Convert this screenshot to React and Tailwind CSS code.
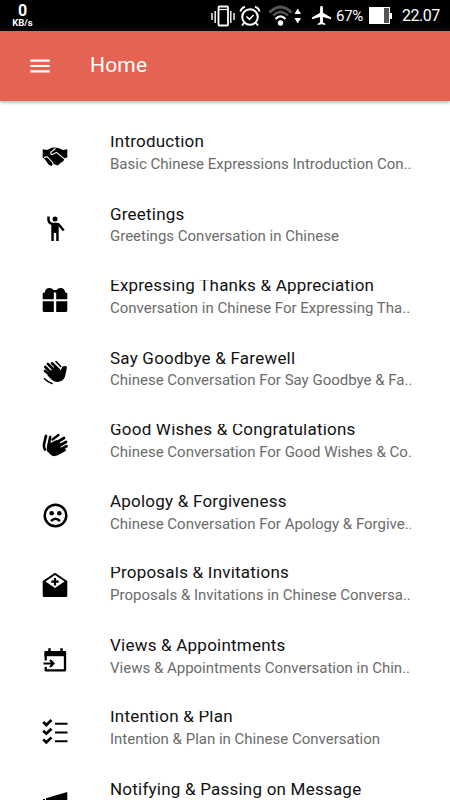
import { MdMenu, MdAirplanemodeActive } from "react-icons/md";

function HandshakeIcon() {
    return (
        <svg viewBox="0 0 26 26" className="size-[26px]">
            <path d="M0.700 6.300L5 7L9.500 4.800L13 4.500L17 5.200L21 7L25.300 6.300V14.500L22.500 15L21.500 18L18.500 20L15.500 22.500L12 21L9.500 23L6.500 21.500L3 16.500L0.700 14.500Z" fill="currentColor" />
            <path d="M13.500 5.500L9 9Q8 11.500 10.500 11.500L14.500 9.300L22 15.700" fill="none" stroke="white" strokeWidth="1.100" />
            <path d="M2 14.800Q4.500 12.700 6.500 15L11 20Q11.500 21.500 10.500 23.500" fill="none" stroke="white" strokeWidth="1.100" />
        </svg>
    );
}

function PersonIcon() {
    return (
        <svg viewBox="0 0 26 26" className="size-[26px]" fill="none" stroke="currentColor">
            <circle cx="13" cy="4" r="2.500" fill="currentColor" stroke="none" />
            <path d="M6.500 1.500V5Q6.800 8.500 10.500 9H15Q17 9.200 18 11L21.700 15.500" strokeWidth="2.500" />
            <path d="M9.300 8H16.700V26H14.200V18H11.800V26H9.300Z" fill="currentColor" stroke="none" />
        </svg>
    );
}

function GiftIcon() {
    return (
        <svg viewBox="0 0 26 26" className="size-[26px]" fill="currentColor">
            <path d="M0.700 12.300V6.800Q0.700 5.500 2.500 5.500H2.800Q3.200 1 7.500 1Q10 1 11.500 3H14.500Q16 1 18.500 1Q22.800 1 23.200 5.500H23.500Q25.300 5.500 25.300 6.800V12.300H14.200V5.500H11.800V12.300ZM0.700 14.300H11.800V25H2.500Q0.700 25 0.700 23.500ZM14.200 14.300H25.300V23.500Q25.300 25 23.500 25H14.200Z" />
        </svg>
    );
}

function WaveIcon() {
    return (
        <svg viewBox="0 0 26 26" className="size-[26px]" fill="none" stroke="currentColor" strokeLinecap="round">
            <path d="M10 4.300L17 11M5.800 4.800L14 13M3.300 8L12 16.500M3 12L11 18.500" strokeWidth="2.600" />
            <path d="M8 12.500L12.500 7.500L18.500 11.500L20.500 7.500Q24.500 6.200 25 8.200L23 17.500Q21.500 22 16 23Q12.500 23.200 9.500 20.500L5.500 16.500Z" fill="currentColor" stroke="none" />
            <path d="M14 2.500L18.700 7.500M2.500 19.800Q5.500 23 10 24.500" strokeWidth="1.600" />
        </svg>
    );
}

function ClapIcon() {
    return (
        <svg viewBox="0 0 26 26" className="size-[26px]" fill="none" stroke="currentColor" strokeLinecap="round">
            <path d="M22 7L12 13M24 11L14 16.500M24.500 15.200L15 20M22.500 19L15 23" strokeWidth="2.700" />
            <path d="M10.500 8.500L16.500 4" strokeWidth="2.300" />
            <path d="M8.500 12L14.500 9L18.500 12V21L15.500 24Q11.500 26.500 8.500 23.500L5 20Q4.500 17 5.500 12.500L7 5.500Q8.500 3.300 9.500 5.500Z" fill="currentColor" stroke="none" />
            <path d="M4 5L2 13Q1.500 16.500 3 18.500" strokeWidth="2.700" />
        </svg>
    );
}

function SadIcon() {
    return (
        <svg viewBox="0 0 26 26" className="size-[26px]">
            <circle cx="13.500" cy="12.500" r="10.800" fill="none" stroke="currentColor" strokeWidth="2.500" />
            <circle cx="9.700" cy="10.300" r="2.300" fill="currentColor" />
            <circle cx="17.300" cy="10.300" r="2.300" fill="currentColor" />
            <path d="M9 18Q13.500 13.500 18 18" fill="none" stroke="currentColor" strokeWidth="2.500" />
        </svg>
    );
}

function InviteIcon() {
    return (
        <svg viewBox="0 0 26 26" className="mb-[5px] size-[26px]">
            <path d="M0.700 9L13 0.700L25.300 9V23.500Q25.300 25 23.800 25H2.200Q0.700 25 0.700 23.500Z" fill="currentColor" />
            <path d="M13 3L22.500 9.500L13 16L3.500 9.500Z" fill="white" />
            <path d="M13 6V13.500M9.300 9.700H16.700" stroke="currentColor" strokeWidth="2.200" />
        </svg>
    );
}

function CalendarIcon() {
    return (
        <svg viewBox="0 0 26 26" className="size-[26px]" fill="none" stroke="currentColor">
            <path d="M3.700 13.500V5.500H23V23.300H3.700V20" strokeWidth="2.300" strokeLinejoin="round" />
            <path d="M2.600 4H24V9.200H2.600Z" fill="currentColor" stroke="none" />
            <path d="M7.500 1.200V5M19.500 1.200V5" strokeWidth="2.500" />
            <path d="M1.500 16.500H11.500M8 13L11.500 16.500L8 20" strokeWidth="2.100" />
        </svg>
    );
}

function ChecklistIcon() {
    return (
        <svg viewBox="0 0 26 26" className="mb-[2px] size-[26px]" fill="none" stroke="currentColor">
            <path d="M1.200 4L4.300 7L9.500 2M1.200 12.700L4.300 15.700L9.500 10.700M1.200 21.400L4.300 24.400L9.500 19.400" strokeWidth="2.700" />
            <path d="M13 5.800H25.500M13 14.500H25.500M13 23.200H25.500" strokeWidth="2" />
        </svg>
    );
}

function MegaphoneIcon() {
    return (
        <svg viewBox="0 0 26 26" className="size-[26px]" fill="currentColor">
            <path d="M1 9H3V18H1ZM4 8.300L25.300 2V24L4 18Z" />
        </svg>
    );
}

// clipped: the title's line box is shorter than its capitals
const topics = [
    { title: "Introduction", body: "Basic Chinese Expressions Introduction Con..", icon: <HandshakeIcon />, clipped: true },
    { title: "Greetings", body: "Greetings Conversation in Chinese", icon: <PersonIcon />, clipped: false },
    { title: "Expressing Thanks & Appreciation", body: "Conversation in Chinese For Expressing Tha...", icon: <GiftIcon />, clipped: true },
    { title: "Say Goodbye & Farewell", body: "Chinese Conversation For Say Goodbye & Fa..", icon: <WaveIcon />, clipped: false },
    { title: "Good Wishes & Congratulations", body: "Chinese Conversation For Good Wishes & Co.", icon: <ClapIcon />, clipped: true },
    { title: "Apology & Forgiveness", body: "Chinese Conversation For Apology & Forgive..", icon: <SadIcon />, clipped: false },
    { title: "Proposals & Invitations", body: "Proposals & Invitations in Chinese Conversa..", icon: <InviteIcon />, clipped: true },
    { title: "Views & Appointments", body: "Views & Appointments Conversation in Chin...", icon: <CalendarIcon />, clipped: false },
    { title: "Intention & Plan", body: "Intention & Plan in Chinese Conversation", icon: <ChecklistIcon />, clipped: true },
    { title: "Notifying & Passing on Message", body: "", icon: <MegaphoneIcon />, clipped: false },
];

function StatusBar() {
    return (
        <div className="flex h-[31px] shrink-0 items-center bg-black text-white">
            <div className="ml-[11px] flex w-[23px] flex-col items-center font-bold">
                <span className="text-[16px] leading-[14px]">0</span>
                <span className="text-[9.500px] leading-[9px]">KB/s</span>
            </div>
            <svg viewBox="0 0 24 22" className="ml-[177px] h-[22px] w-[24px]" fill="none" stroke="white">
                <path d="M1 8V15M4.200 6V18M19.800 6V18M23 8V15" strokeWidth="1.400" />
                <rect x="7.500" y="1.500" width="9.500" height="19" rx="1" strokeWidth="1.800" />
                <path d="M8 4.500H16" strokeWidth="1.200" />
            </svg>
            <svg viewBox="0 0 22 22" className="ml-[4px] size-[22px]" fill="none" stroke="white">
                <circle cx="11" cy="12" r="7.800" strokeWidth="2" />
                <path d="M1.500 6.500Q2 3 6 1.700M20.500 6.500Q20 3 16 1.700M5 18L3 20.500M17 18L19 20.500" strokeWidth="2" />
                <path d="M7.500 11.500L10.500 14.500L14.500 10" strokeWidth="1.500" />
            </svg>
            <svg viewBox="0 0 34 22" className="ml-[7px] h-[22px] w-[34px]" fill="none">
                <path d="M1.500 7.500Q12.500 -3.500 23.500 7.500" stroke="#555" strokeWidth="3" />
                <path d="M5 10.500Q12.500 3.500 20 10.500" stroke="#555" strokeWidth="2.200" />
                <path d="M7.500 14Q12.500 9 17.500 14" stroke="white" strokeWidth="2.200" />
                <circle cx="12.500" cy="18" r="2.700" fill="white" />
                <path d="M26.500 9L29.700 3.500L33 9ZM26.500 13H33L29.700 18.500Z" fill="white" />
            </svg>
            <MdAirplanemodeActive className="ml-[8px] size-[23px]" />
            <span className="ml-[3px] w-[28px] pt-[1px] text-[15px] leading-[20px] tracking-[-0.300px]">67%</span>
            <div className="ml-[5px] flex items-center">
                <div className="flex h-[17px] w-[21px] border border-white bg-white">
                    <div className="ml-auto h-full w-[5px] bg-[#555]"></div>
                </div>
                <div className="h-[6px] w-[2px] bg-white"></div>
            </div>
            <span className="ml-[10px] pt-[1px] text-[16px] tracking-[-0.500px]">22.07</span>
        </div>
    );
}

function Topic({ title, body, icon, clipped }) {
    return (
        <li className="flex h-[71.900px] shrink-0 items-center">
            <div className="ml-[42px] flex w-[26px] justify-center">{icon}</div>
            <div className="ml-[42px] w-[301px] self-start">
                {clipped ? (
                    <h2 className="mt-[15.500px] h-[17px] overflow-hidden text-[17px] leading-[11px] tracking-[0.220px] whitespace-nowrap text-[#111]">{title}</h2>
                ) : (
                    <h2 className="mt-[13.500px] h-[19.500px] text-[17px] leading-[16px] tracking-[0.220px] whitespace-nowrap text-[#111]">{title}</h2>
                )}
                <p className="h-[20px] overflow-hidden text-[15px] leading-[22px] whitespace-nowrap text-[#6b6b6b]">{body}</p>
            </div>
        </li>
    );
}

function App() {
    return (
        <div className="flex h-[800px] w-[450px] flex-col overflow-hidden bg-white font-[Roboto,sans-serif]">
            <StatusBar />
            <header className="flex h-[70px] shrink-0 items-center bg-[#e56353] text-white shadow-[0_2px_3px_rgba(0,0,0,0.25)]">
                <MdMenu className="ml-[27px] size-[26px]" />
                <h1 className="ml-[37px] text-[21px] tracking-[0.200px]">Home</h1>
            </header>
            <ul className="mt-[19.500px] flex flex-col text-black">
                {topics.map((topic) => (
                    <Topic key={topic.title} {...topic} />
                ))}
            </ul>
        </div>
    );
}

export default App;
